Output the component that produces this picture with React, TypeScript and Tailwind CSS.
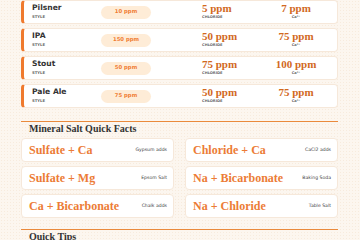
import React from "react";

const styles = [
  { name: "Pilsner", sulfate: "10 ppm", chloride: "5 ppm", ca: "7 ppm" },
  { name: "IPA", sulfate: "150 ppm", chloride: "50 ppm", ca: "75 ppm" },
  { name: "Stout", sulfate: "50 ppm", chloride: "75 ppm", ca: "100 ppm" },
  { name: "Pale Ale", sulfate: "75 ppm", chloride: "50 ppm", ca: "75 ppm" },
];

const facts = [
  { title: "Sulfate + Ca", note: "Gypsum adds" },
  { title: "Chloride + Ca", note: "CaCl2 adds" },
  { title: "Sulfate + Mg", note: "Epsom Salt" },
  { title: "Na + Bicarbonate", note: "Baking Soda" },
  { title: "Ca + Bicarbonate", note: "Chalk adds" },
  { title: "Na + Chloride", note: "Table Salt" },
];

const sans = "font-['DejaVu_Sans',sans-serif]";
const serif = "font-['Liberation_Serif',serif]";

export default function App() {
  return (
    <div className="w-[360px] h-[240px] overflow-hidden bg-[#fcf6ef] bg-[radial-gradient(#f7ebdd_0.6px,transparent_0.7px)] bg-[length:3px_3px]">
      <div className="mx-[21px] w-[317px]">
        <div className="flex flex-col gap-[4px]">
          {styles.map((s) => (
            <div
              key={s.name}
              className="h-[24px] flex items-center bg-white border border-[#f6e8da] border-l-[3px] border-l-[#ef7a2e] rounded-[4px] pl-[8px]"
            >
              <div className="w-[69px] flex flex-col pb-[2px]">
                <span className={`${sans} text-[7.6px] leading-[10px] font-bold text-[#333]`}>{s.name}</span>
                <span className={`${sans} text-[3.8px] leading-[5px] font-bold text-[#666] mt-[1px]`}>STYLE</span>
              </div>
              <div className="w-[50px] h-[13px] rounded-full bg-[#feecd7] flex items-center justify-center">
                <span className={`${sans} text-[5.3px] font-bold text-[#f07c32]`}>{s.sulfate}</span>
              </div>
              <div className="w-[51px]" />
              <div className="w-[62px] flex flex-col pb-[2px]">
                <span className={`${serif} text-[11px] leading-[11px] font-bold text-[#d2691e]`}>{s.chloride}</span>
                <span className={`${sans} text-[3.6px] leading-[5px] font-bold text-[#666] mt-[1px]`}>CHLORIDE</span>
              </div>
              <div className="w-[64px] flex flex-col items-center pb-[2px]">
                <span className={`${serif} text-[11px] leading-[11px] font-bold text-[#d2691e]`}>{s.ca}</span>
                <span className={`${sans} text-[3.6px] leading-[5px] font-bold text-[#666] mt-[1px]`}>Ca²⁺</span>
              </div>
            </div>
          ))}
        </div>

        <div className="mt-[13px] border-t border-[#ea8a3c] pt-[1px]">
          <h2 className={`${serif} text-[10px] leading-[12px] font-bold text-[#333] pl-[8px]`}>
            Mineral Salt Quick Facts
          </h2>
          <div className="mt-[3px] grid grid-cols-2 gap-x-[11px] gap-y-[4px]">
            {facts.map((f) => (
              <div
                key={f.title}
                className="h-[24px] flex items-center justify-between bg-white border border-[#f6e8da] rounded-[4px] pl-[7px] pr-[6px]"
              >
                <span className={`${serif} text-[12px] font-bold text-[#ec7c36]`}>{f.title}</span>
                <span className={`${sans} text-[4.6px] text-[#444]`}>{f.note}</span>
              </div>
            ))}
          </div>
        </div>

        <div className="mt-[11px] border-t border-[#ea8a3c] pt-[1px]">
          <h2 className={`${serif} text-[10px] leading-[12px] font-bold text-[#333] pl-[8px]`}>Quick Tips</h2>
        </div>
      </div>
    </div>
  );
}
